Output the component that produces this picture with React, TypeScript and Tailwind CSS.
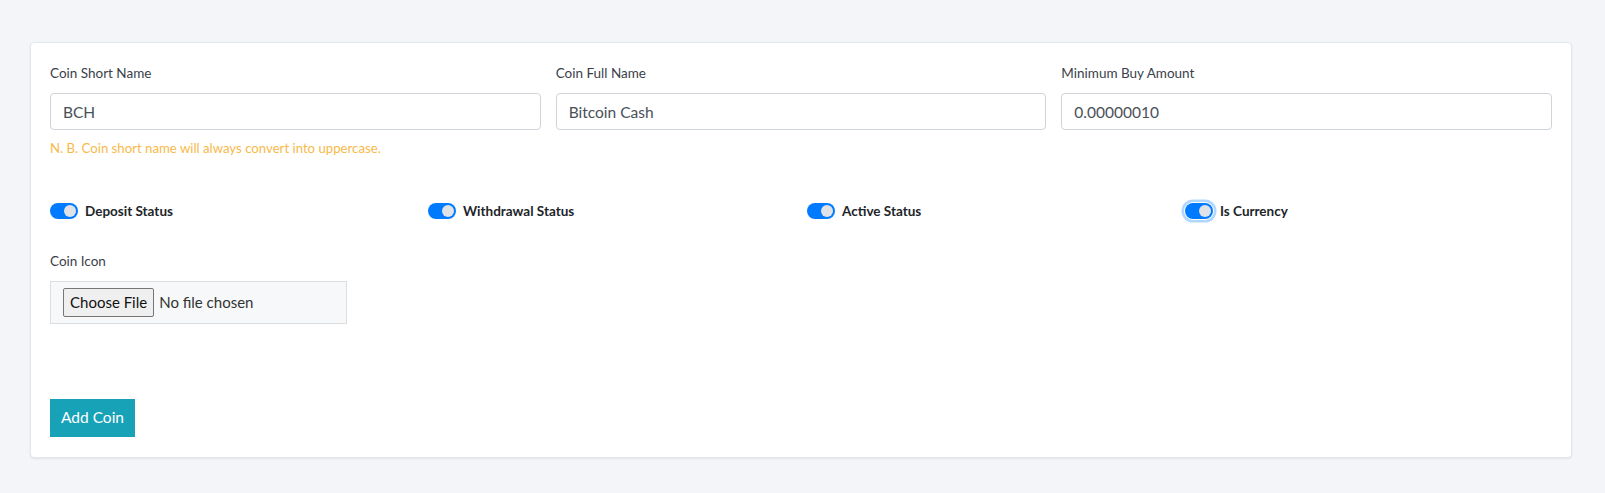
import { useState } from "react";

function Toggle({ label, focused }: { label: string; focused?: boolean }) {
  const [on, setOn] = useState(true);
  return (
    <label className="flex items-center h-[22px] cursor-pointer select-none">
      <button
        type="button"
        onClick={() => setOn(!on)}
        className={`relative w-[28px] h-[16px] rounded-full ${on ? "bg-[#007bff]" : "bg-[#adb5bd]"} ${
          focused ? "shadow-[0_0_0_1px_#fff,0_0_0_3.5px_rgba(0,123,255,0.3)]" : ""
        }`}
      >
        <span
          className={`absolute top-[2px] w-[12px] h-[12px] rounded-full bg-[#dfe2e7] ${on ? "left-[14px]" : "left-[2px]"}`}
        />
      </button>
      <span className="ml-[7px] text-[13.5px] font-bold text-[#212529]">{label}</span>
    </label>
  );
}

function Field({ label, value, help }: { label: string; value: string; help?: string }) {
  return (
    <div>
      <div className="h-[21px] leading-[21px] mb-[9px] text-[13.5px] text-[#3a3f4b]">{label}</div>
      <input
        defaultValue={value}
        className="w-full h-[37px] px-[12px] text-[15.5px] text-[#495057] bg-white border border-[#ced4da] rounded-[4px] outline-none"
      />
      {help && <div className="mt-[9px] leading-[18px] text-[13.2px] text-[#f8b94a]">{help}</div>}
    </div>
  );
}

export default function App() {
  return (
    <div className="min-h-[493px] bg-[#f4f5f8] pt-[42px] font-['Lato',sans-serif]">
      <div className="ml-[30px] w-[1542px] bg-white border border-[#e3e6ea] rounded-[4px] shadow-[0_1px_2px_rgba(0,0,0,0.08)] pt-[20px] pb-[20px] px-[19px]">
        <div className="grid grid-cols-3 gap-x-[15px]">
          <Field label="Coin Short Name" value="BCH" help="N. B. Coin short name will always convert into uppercase." />
          <Field label="Coin Full Name" value="Bitcoin Cash" />
          <Field label="Minimum Buy Amount" value="0.00000010" />
        </div>

        <div className="mt-[43px] grid grid-cols-[378px_379px_378px_1fr]">
          <Toggle label="Deposit Status" />
          <Toggle label="Withdrawal Status" />
          <Toggle label="Active Status" />
          <Toggle label="Is Currency" focused />
        </div>

        <div className="mt-[29px] h-[21px] leading-[21px] mb-[9px] text-[13.5px] text-[#3a3f4b]">Coin Icon</div>
        <div className="w-[297px] h-[43px] flex items-center px-[12px] bg-[#f7f8f9] border border-[#dcdee0]">
          <button
            type="button"
            className="h-[29px] px-[6px] text-[15px] text-[#111] bg-[#efefef] border border-[#767676] rounded-[2px]"
          >
            Choose File
          </button>
          <span className="ml-[5px] text-[15px] text-[#333]">No file chosen</span>
        </div>

        <button
          type="button"
          className="mt-[75px] h-[38px] px-[11px] bg-[#17a2b8] text-white text-[15.5px]"
        >
          Add Coin
        </button>
      </div>
    </div>
  );
}
